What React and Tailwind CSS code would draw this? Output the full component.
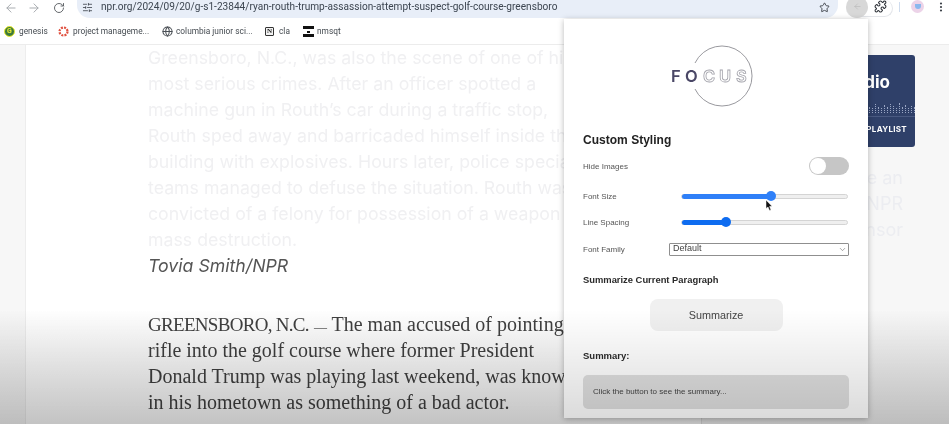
import React from "react";
import { ArrowLeft, ArrowRight, RotateCw, Star, Puzzle, MoreVertical, SlidersHorizontal, ChevronDown, Globe } from "lucide-react";

const faded = [
  "Greensboro, N.C., was also the scene of one of his",
  "most serious crimes. After an officer spotted a",
  "machine gun in Routh’s car during a traffic stop,",
  "Routh sped away and barricaded himself inside the",
  "building with explosives. Hours later, police special",
  "teams managed to defuse the situation. Routh was",
  "convicted of a felony for possession of a weapon of",
  "mass destruction.",
];
const body = [
  "rifle into the golf course where former President",
  "Donald Trump was playing last weekend, was known",
  "in his hometown as something of a bad actor.",
];

function Bookmark({ icon, label, className }) {
  return (
    <div className={"flex shrink-0 items-center " + className}>
      {icon}
      <span className="whitespace-nowrap text-[8.3px] tracking-[0.02px] text-[#444a50]">{label}</span>
    </div>
  );
}

function Slider({ label, pct, color }) {
  return (
    <div className="flex h-[26px] items-center">
      <span className="w-[98px] pt-[2px] text-[8px] text-[#555]">{label}</span>
      <div className="flex h-[5px] w-[167px] items-center rounded-full border border-[#d4d4d4] bg-[#efefef]">
        <div className={"h-[5px] rounded-l-full " + pct + " " + color} />
        <div className={"-ml-[5px] h-[10px] w-[10px] shrink-0 rounded-full " + color} />
      </div>
    </div>
  );
}

export default function App() {
  return (
    <div className="relative flex h-[424px] w-[949px] flex-col overflow-hidden bg-white font-['Roboto',sans-serif] blur-[0.4px]">
      {/* browser toolbar */}
      <div className="flex h-[19px] shrink-0 items-start">
        <div className="flex h-[15px] w-[77px] shrink-0 items-center pl-[4px] text-[#a3a7ab]">
          <ArrowLeft size={14} strokeWidth={1.6} />
          <ArrowRight size={14} strokeWidth={1.6} className="ml-[9px]" />
          <RotateCw size={12} strokeWidth={1.8} className="ml-[12px] text-[#55595e]" />
        </div>
        <div className="flex h-[18px] w-[761px] shrink-0 items-center rounded-b-[13px] bg-[#e8eef8] pb-[4px] pl-[4px] pr-[8px]">
          <SlidersHorizontal size={11} strokeWidth={1.8} className="ml-[1px] text-[#40474f]" />
          <span className="ml-[8px] flex-1 whitespace-nowrap text-[10.1px] tracking-[0.01px] text-[#3c4550]">
            npr.org/2024/09/20/g-s1-23844/ryan-routh-trump-assassion-attempt-suspect-golf-course-greensboro
          </span>
          <Star size={11} strokeWidth={2} className="text-[#3c4148]" />
        </div>
        <div className="ml-[8px] flex h-[17px] w-[47px] shrink-0 items-center rounded-b-[10px] rounded-r-[10px] border-b border-r border-[#e4e6ea]">
          <div className="-mt-[3px] flex h-[22px] w-[22px] shrink-0 items-center justify-center rounded-full bg-[#d8d8d8]">
            <ArrowLeft size={9} strokeWidth={1.5} className="text-[#b4b4b4]" />
          </div>
          <Puzzle size={13} strokeWidth={2} className="-mt-[4px] ml-[6px] text-[#32363c]" />
        </div>
        <div className="ml-[6px] mt-[2px] h-[10px] w-px bg-[#cfdcee]" />
        <div className="ml-[11px] mt-0 flex h-[13px] w-[13px] shrink-0 items-center justify-center rounded-full bg-[#ecd3e8]">
          <div className="h-[5px] w-[6px] rounded-b-full bg-[#8ab8ee]" />
        </div>
        <MoreVertical size={12} strokeWidth={2.4} className="ml-[11px] mt-[1px] shrink-0 text-[#3c4148]" />
      </div>

      {/* bookmarks */}
      <div className="relative flex h-[26px] shrink-0 items-center border-b border-[#ececec] pl-[4px]">
        <Bookmark
          className="w-[54px]"
          label="genesis"
          icon={
            <span className="mr-[4px] flex h-[11px] w-[11px] shrink-0 items-center justify-center rounded-full border border-[#ecec30] bg-[#3d7a3a] text-[7px] font-bold text-[#ecec30]">G</span>
          }
        />
        <Bookmark
          className="w-[104px]"
          label="project manageme..."
          icon={
            <svg className="mr-[4px] shrink-0" width="11" height="11" viewBox="0 0 11 11">
              <circle cx="5.5" cy="5.5" r="4" fill="none" stroke="#e0503f" strokeWidth="2.2" strokeDasharray="2 1.15" />
            </svg>
          }
        />
        <Bookmark
          className="w-[103px]"
          label="columbia junior sci..."
          icon={<Globe size={11} strokeWidth={2.2} className="mr-[3px] shrink-0 text-[#4a4f55]" />}
        />
        <Bookmark
          className="w-[38px]"
          label="cla"
          icon={
            <span className="mr-[5px] flex h-[9px] w-[9px] shrink-0 items-center justify-center rounded-[1px] border border-[#333] bg-[#f2f2f2] font-['Liberation_Serif',serif] text-[7px] font-bold text-[#222]">N</span>
          }
        />
        <Bookmark
          label="nmsqt"
          icon={
            <span className="mr-[3px] flex h-[11px] w-[11px] shrink-0 flex-col items-center justify-between">
              <span className="h-[3px] w-[11px] bg-[#111]" />
              <span className="h-[2px] w-[3px] bg-[#111]" />
              <span className="h-[3px] w-[11px] bg-[#111]" />
            </span>
          }
        />
      </div>

      {/* page */}
      <div className="flex min-h-0 flex-1 overflow-hidden bg-[#f7f7f7]">
        <div className="w-[26px] shrink-0 border-r border-[#ededed]" />
        <div className="w-[676px] shrink-0 overflow-hidden border-r border-[#e4e4e4] bg-white pl-[122px]">
          <div className="font-['Inter',sans-serif] text-[17.7px] leading-[26px] tracking-[0.02px] text-[#f0f0f2]">
            {faded.map((l) => (
              <div key={l} className="whitespace-nowrap">{l}</div>
            ))}
          </div>
          <div className="font-['Inter',sans-serif] text-[17.7px] italic leading-[26px] text-[#555]">Tovia Smith/NPR</div>
          <div className="mt-[32px] font-['Liberation_Serif',serif] text-[20px] leading-[26px] text-[#404040]">
            <div className="h-[26px] whitespace-nowrap">
              <span className="text-[19px] tracking-[-0.7px]">GREENSBORO, N.C.</span> <span className="text-[13px]">—</span> The man accused of pointing a
            </div>
            {body.map((l) => (
              <div key={l} className="whitespace-nowrap">{l}</div>
            ))}
          </div>
        </div>
        <div className="flex-1 pl-[18px] pt-[10px]">
          <div className="flex h-[92px] w-[195px] flex-col rounded-[3px] bg-[#2f4069]">
            <div className="mt-[15px] pr-[25px] text-right font-['Inter',sans-serif] text-[17px] font-bold leading-[24px] text-white">Studio</div>
            <div className="mt-[9px] flex h-[10px] items-end justify-end gap-[2px] overflow-hidden">
              {[4, 2, 3, 2, 4, 6, 3, 2, 5, 7, 3, 2, 6, 3, 2, 5, 3, 6, 4, 2, 7, 3, 5, 2, 4, 3].map((h, i) => (
                <div key={i} className="w-[1px] border-l border-dotted border-[#9aa6c4]" style={{ height: h + 3 }} />
              ))}
            </div>
            <div className="mt-[3px] h-px bg-[#4a5a82]" />
            <div className="mt-[6px] pr-[8px] text-right font-['Inter',sans-serif] text-[8px] font-bold tracking-[0.3px] text-white">PLAYLIST</div>
          </div>
          <div className="mt-[18px] w-[183px] text-right font-['Inter',sans-serif] text-[18px] leading-[26px] text-[#ecedf1]">
            <div>Become an</div>
            <div>of NPR</div>
            <div>Sponsor</div>
          </div>
        </div>
      </div>

      {/* page darkening under the popup */}
      <div className="pointer-events-none absolute inset-x-0 bottom-0 h-[115px] bg-gradient-to-b from-transparent to-black/10" />

      {/* extension popup */}
      <div className="absolute left-[564px] top-[19px] flex h-[399px] w-[304px] flex-col bg-white px-[19px] shadow-[0_1px_6px_rgba(0,0,0,0.28)]">
        <svg className="mt-[25px] shrink-0 self-center" width="90" height="64" viewBox="0 0 90 64">
          <path d="M 24 19 A 30 30 0 1 1 24 45" fill="none" stroke="#8d8d93" strokeWidth="0.9" />
          <text x="0" y="38" fontFamily="Inter, sans-serif" fontSize="16.5" fontWeight="600" fill="#4a4766">F</text>
          <text x="14" y="38" fontFamily="Inter, sans-serif" fontSize="16.5" fontWeight="600" fill="#4a4766">O</text>
          <text x="32" y="38" fontFamily="Inter, sans-serif" fontSize="16.5" fontWeight="600" fill="#fff" stroke="#a4a4ac" strokeWidth="0.8">C</text>
          <text x="48" y="38" fontFamily="Inter, sans-serif" fontSize="16.5" fontWeight="600" fill="#fff" stroke="#a4a4ac" strokeWidth="0.8">U</text>
          <text x="65" y="38" fontFamily="Inter, sans-serif" fontSize="16.5" fontWeight="600" fill="#fff" stroke="#a4a4ac" strokeWidth="0.8">S</text>
        </svg>
        <div className="font-['Liberation_Sans',sans-serif]">
          <h2 className="mt-[24px] text-[12px] font-bold leading-[16px] tracking-[0.02px] text-[#222]">Custom Styling</h2>
          <div className="mt-[9px] flex h-[18px] w-[266px] items-center justify-between">
            <span className="pt-[1px] text-[8px] text-[#555]">Hide Images</span>
            <div className="flex h-[18px] w-[40px] items-center rounded-full bg-[#c6c6c6] pl-[1px]">
              <div className="h-[16px] w-[16px] rounded-full bg-white" />
            </div>
          </div>
          <div className="mt-[8px]">
            <Slider label="Font Size" pct="w-[54%]" color="bg-[#2f80f8]" />
            <Slider label="Line Spacing" pct="w-[26.5%]" color="bg-[#0e6cf0]" />
          </div>
          <div className="mt-[1px] flex h-[26px] items-center">
            <span className="w-[86px] pt-[1px] text-[8px] text-[#555]">Font Family</span>
            <div className="flex h-[13px] w-[180px] items-center justify-between rounded-[1px] border border-[#8f8f8f] pl-[3px] pr-[1px] text-[9px] text-[#444]">
              Default
              <ChevronDown size={9} strokeWidth={1.5} className="text-[#666]" />
            </div>
          </div>
          <h3 className="mt-[12px] text-[9.4px] font-bold leading-[12px] text-[#2a2a2a]">Summarize Current Paragraph</h3>
          <div className="mt-[13px] flex w-[266px] justify-center">
            <button className="h-[32px] w-[133px] rounded-[8px] bg-[#f0f0f0] text-[10.8px] text-[#444]">Summarize</button>
          </div>
          <h3 className="mt-[19px] text-[9.5px] font-bold leading-[12px] text-[#2a2a2a]">Summary:</h3>
          <div className="mt-[13px] flex h-[34px] w-[266px] items-center rounded-[5px] bg-[#dfdfdf] pl-[10px] text-[8px] text-[#444]">
            Click the button to see the summary...
          </div>
        </div>
      </div>

      {/* mouse pointer */}
      <svg className="absolute left-[765px] top-[199px]" width="8" height="13" viewBox="0 0 8 13">
        <path d="M1 1 L1 9.5 L3 8 L4.5 11.5 L6 11 L4.6 7.5 L7 7.3 Z" fill="#111" stroke="#fff" strokeWidth="0.5" />
      </svg>

      {/* video scrim */}
      <div className="pointer-events-none absolute inset-x-0 bottom-0 h-[115px] bg-gradient-to-b from-transparent to-black/15" />
    </div>
  );
}
